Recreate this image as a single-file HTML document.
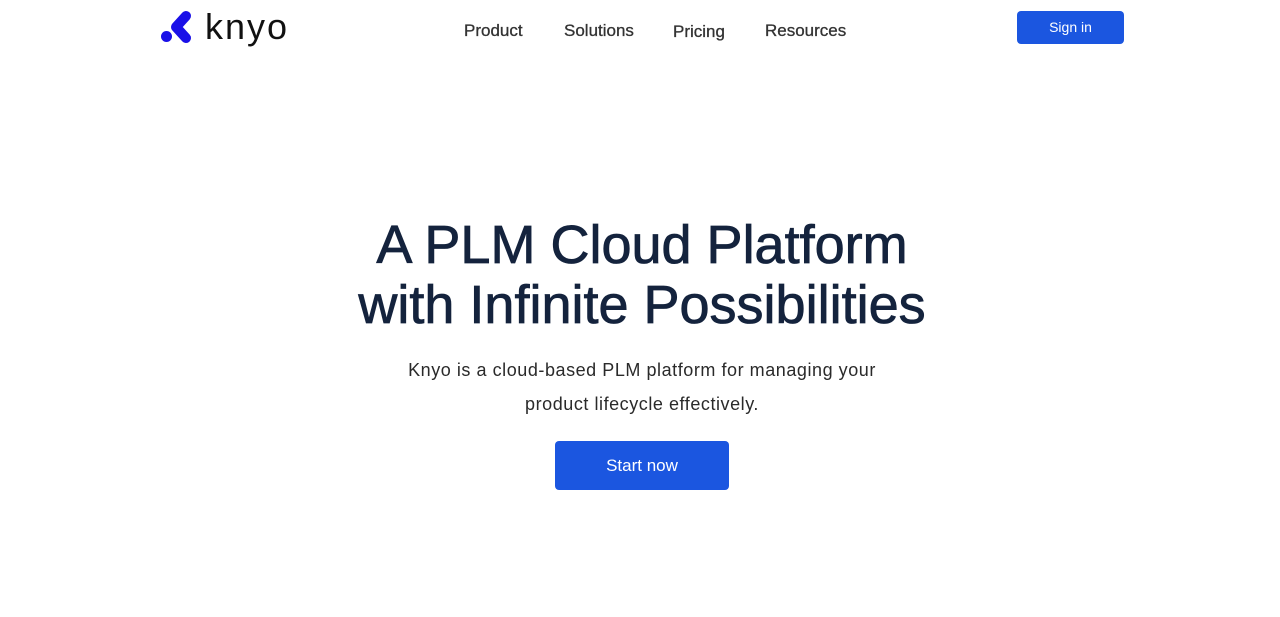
<!DOCTYPE html>
<html><head><style>
body{margin:0;width:1280px;height:617px;background:#fff;font-family:"Liberation Sans",sans-serif;position:relative;overflow:hidden}
.nav a{position:absolute;top:21px;font-size:17px;color:#333;text-decoration:none;-webkit-text-stroke:0.3px #333}
.btn{position:absolute;background:#1b56e0;color:#fff;border-radius:4px;text-align:center}
h1{position:absolute;left:0;width:1284px;top:215px;margin:0;text-align:center;font-size:54px;line-height:60px;font-weight:400;color:#14233d;letter-spacing:0px;-webkit-text-stroke:0.8px #14233d}
p{position:absolute;left:0;width:1284px;top:353px;margin:0;text-align:center;font-size:18px;line-height:34px;color:#2a2a2a;letter-spacing:0.55px}
</style></head><body>
<svg style="position:absolute;left:158px;top:6px" width="40" height="40" viewBox="0 0 40 40">
<circle cx="8.5" cy="30.5" r="5.5" fill="#1a10e8"/>
<path d="M28 10 L18 21 L28 32" stroke="#1a10e8" stroke-width="10" stroke-linecap="round" stroke-linejoin="round" fill="none"/>
</svg>
<div style="position:absolute;left:205px;top:6px;font-size:36px;color:#111;letter-spacing:2px">knyo</div>
<div class="nav"><a style="left:464px">Product</a><a style="left:564px">Solutions</a><a style="left:673px;top:22px">Pricing</a><a style="left:765px">Resources</a></div>
<div class="btn" style="left:1017px;top:11px;width:107px;height:33px;line-height:32px;font-size:14px">Sign in</div>
<h1>A PLM Cloud Platform<br>with Infinite Possibilities</h1>
<p>Knyo is a cloud-based PLM platform for managing your<br>product lifecycle effectively.</p>
<div class="btn" style="left:555px;top:441px;width:174px;height:49px;line-height:49px;font-size:17px">Start now</div>
</body></html>
